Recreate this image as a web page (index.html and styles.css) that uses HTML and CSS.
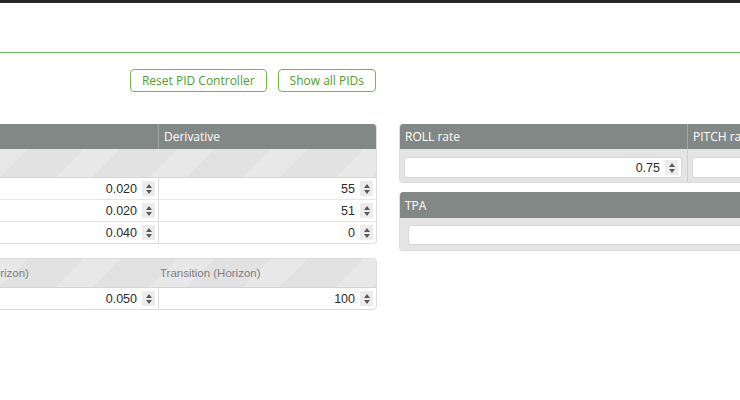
FILE: index.html
```html
<!DOCTYPE html>
<html lang="en">
<head>
    <meta charset="UTF-8">
    <title>PID Tuning</title>
    <link rel="stylesheet" href="styles.css">
</head>
<body>
    <div class="topbar"></div>
    <div class="tab-head"></div>

    <div class="main">
        <!-- Coluna esquerda: PIDs -->
        <div class="col-left">
            <div class="toolbar">
                <a class="btn" href="#">Reset PID Controller</a>
                <a class="btn" href="#">Show all PIDs</a>
            </div>

            <div class="gui-box">
                <div class="grid head">
                    <div class="cell"></div>
                    <div class="cell">Derivative</div>
                </div>
                <div class="subhead"></div>
                <div class="grid row">
                    <div class="cell num"><input type="text" value="0.020"><span class="spin"></span></div>
                    <div class="cell num"><input type="text" value="55"><span class="spin"></span></div>
                </div>
                <div class="grid row">
                    <div class="cell num"><input type="text" value="0.020"><span class="spin"></span></div>
                    <div class="cell num"><input type="text" value="51"><span class="spin"></span></div>
                </div>
                <div class="grid row">
                    <div class="cell num"><input type="text" value="0.040"><span class="spin"></span></div>
                    <div class="cell num"><input type="text" value="0"><span class="spin"></span></div>
                </div>
            </div>

            <div class="gui-box horizon">
                <div class="grid subhead labels">
                    <div class="cell">Strength (Horizon)</div>
                    <div class="cell">Transition (Horizon)</div>
                </div>
                <div class="grid row">
                    <div class="cell num"><input type="text" value="0.050"><span class="spin"></span></div>
                    <div class="cell num"><input type="text" value="100"><span class="spin"></span></div>
                </div>
            </div>
        </div>

        <!-- Coluna direita: rates e TPA -->
        <div class="col-right">
            <div class="gui-box panel">
                <div class="grid3 head">
                    <div class="cell">ROLL rate</div>
                    <div class="cell">PITCH rate</div>
                    <div class="cell"></div>
                </div>
                <div class="grid3 panel-body">
                    <div class="cell"><div class="field"><input type="text" value="0.75"><span class="spin"></span></div></div>
                    <div class="cell"><div class="field"><input type="text" value=""></div></div>
                    <div class="cell"><div class="field"><input type="text" value=""></div></div>
                </div>
            </div>

            <div class="gui-box panel tpa">
                <div class="head single"><div class="cell">TPA</div></div>
                <div class="tpa-body">
                    <div class="field wide"><input type="text" value=""></div>
                </div>
            </div>
        </div>
    </div>
</body>
</html>
```

FILE: styles.css
```css
/* Base */
body {
    margin: 0;
    background-color: #fff;
    font-family: "Open Sans", Arial, sans-serif;
    overflow: hidden;
    width: 740px;
    height: 400px;
}

.topbar {
    height: 3px;
    background-color: #262626;
}

.tab-head {
    height: 49px;
    border-bottom: 1px solid #7cbf5b;
}

.main {
    display: flex;
    align-items: flex-start;
    gap: 22px;
    margin-left: -67px;
    padding-top: 16px;
}

.col-left {
    width: 444px;
    flex-shrink: 0;
}

.col-right {
    width: 861px;
    flex-shrink: 0;
    margin-top: 55px;
}

/* Botões */
.toolbar {
    display: flex;
    justify-content: flex-end;
    gap: 11px;
    margin-right: 1px;
    margin-bottom: 32px;
}

.btn {
    display: block;
    height: 21px;
    line-height: 21px;
    padding: 0 11px;
    border: 1px solid #72b84e;
    border-radius: 4px;
    color: #4f9e2a;
    font-size: 12px;
    text-decoration: none;
}

/* Caixas */
.gui-box {
    border: 1px solid #dcdcdc;
    border-top: none;
    border-radius: 4px;
    overflow: hidden;
    background-color: #fff;
}

.grid {
    display: grid;
    grid-template-columns: 224px 1fr;
}

.grid3 {
    display: grid;
    grid-template-columns: 287px 287px 1fr;
}

.head {
    height: 25px;
    background-color: #828885;
    color: #fff;
    font-size: 12px;
    line-height: 25px;
}

.head .cell {
    padding-left: 5px;
}

.head .cell + .cell {
    border-left: 1px solid #a2a6a4;
}

.subhead {
    height: 28px;
    border-bottom: 1px solid #d4d4d4;
    background-color: #e2e2e2;
    background-image: repeating-linear-gradient(135deg,
        #e2e2e2 0px, #e2e2e2 40px, #e8e8e8 40px, #e8e8e8 66px);
}

.horizon {
    margin-top: 14px;
    border-top: 1px solid #dcdcdc;
}

.labels {
    font-family: "Liberation Sans", Arial, sans-serif;
    font-size: 11.5px;
    color: #808080;
    line-height: 28px;
}

.labels .cell {
    padding-left: 1px;
}

.labels .cell + .cell {
    padding-left: 2px;
}

.row {
    height: 21px;
    border-bottom: 1px solid #e6e6e6;
}

.row:last-child {
    border-bottom: none;
}

.row .cell + .cell {
    border-left: 1px solid #dedede;
}

.num {
    display: flex;
    align-items: center;
    justify-content: flex-end;
    padding-right: 3px;
}

input {
    border: none;
    background: transparent;
    font-family: "Liberation Sans", Arial, sans-serif;
    font-size: 12.5px;
    color: #2b2b2b;
    text-align: right;
    width: 100%;
    min-width: 0;
    padding: 0 5px 0 0;
    outline: none;
}

/* Setas do campo numérico */
.spin {
    flex-shrink: 0;
    width: 13px;
    height: 15px;
    background-color: #ececec;
    display: flex;
    flex-direction: column;
    align-items: center;
    justify-content: center;
    gap: 2px;
}

.spin::before,
.spin::after {
    content: "";
    width: 0;
    height: 0;
    border-left: 3.5px solid transparent;
    border-right: 3.5px solid transparent;
}

.spin::before {
    border-bottom: 4px solid #5a5a5a;
}

.spin::after {
    border-top: 4px solid #5a5a5a;
}

/* Painel de rates */
.panel-body {
    background-color: #e4e4e4;
    height: 33px;
}

.panel-body .cell {
    padding: 8px 5px 0 4px;
}

.panel-body .cell + .cell {
    border-left: 1px solid #cfcfcf;
}

.field {
    display: flex;
    align-items: center;
    height: 19px;
    padding-right: 3px;
    border: 1px solid #d6d6d6;
    border-radius: 3px;
    background-color: #fff;
}

.tpa {
    margin-top: 9px;
}

.tpa .head {
    height: 26px;
    line-height: 27px;
}

.tpa-body {
    background-color: #e4e4e4;
    padding: 7px 5px 5px 8px;
}

.field.wide {
    height: 18px;
}
```
